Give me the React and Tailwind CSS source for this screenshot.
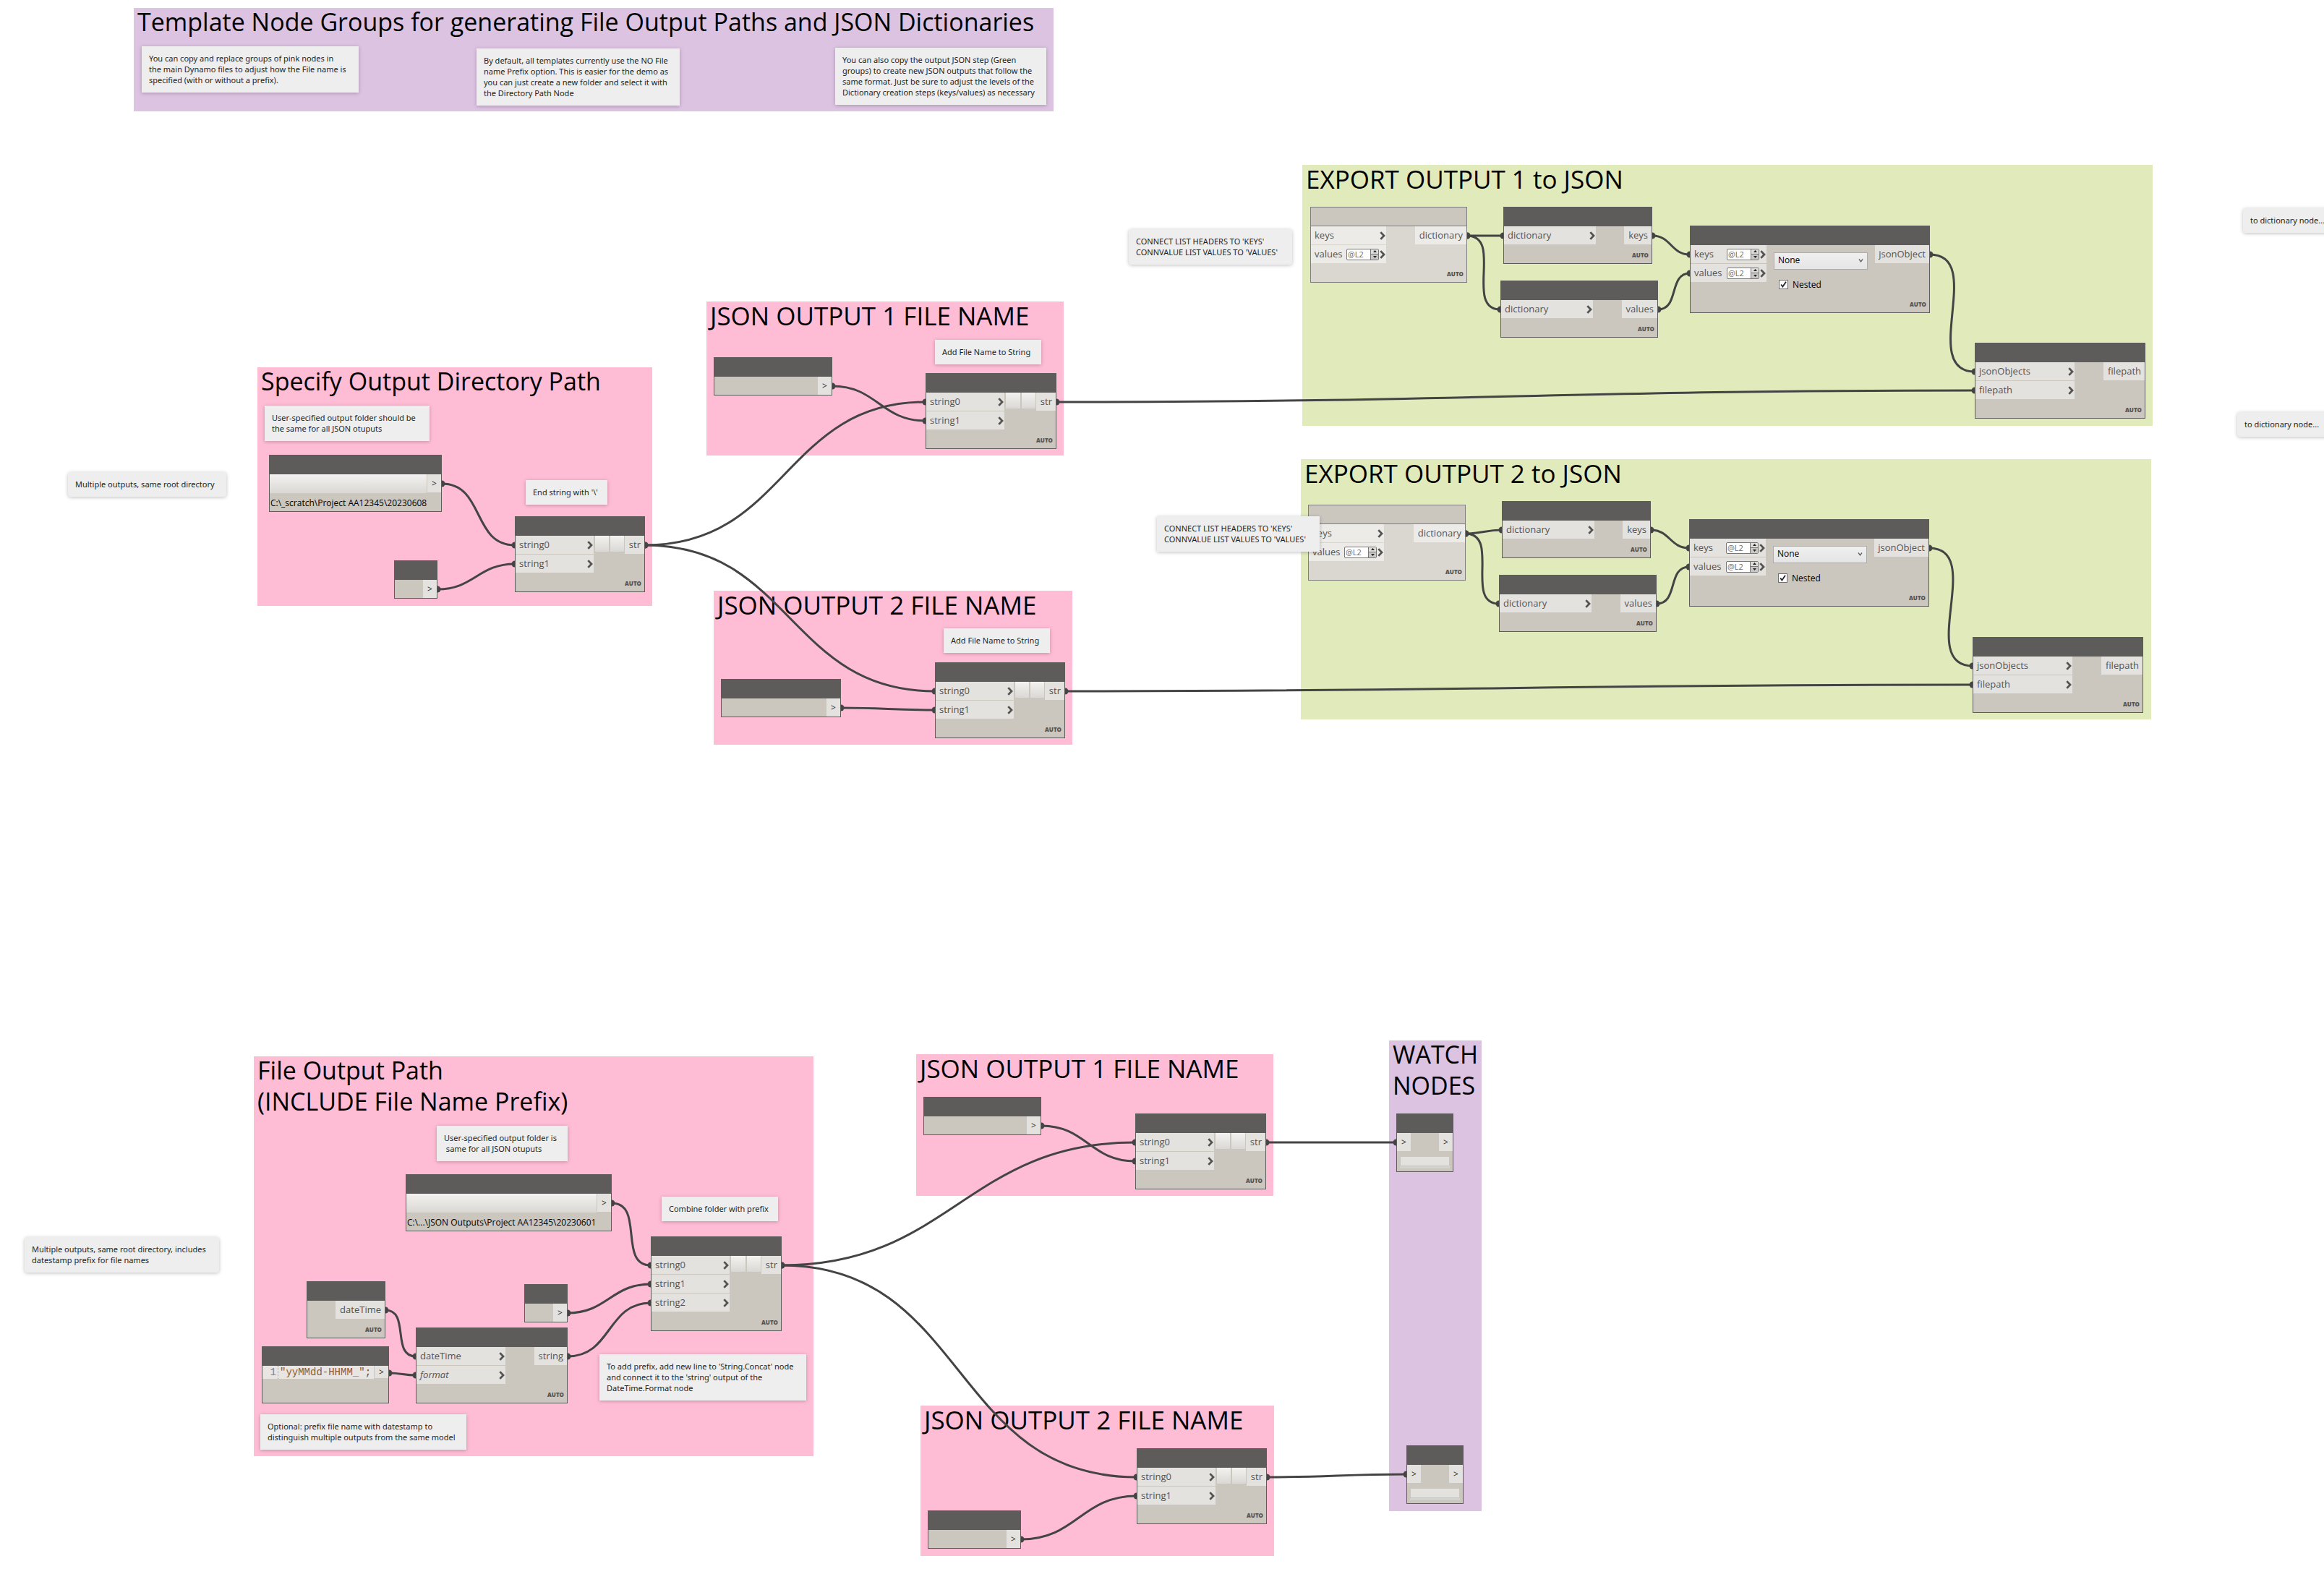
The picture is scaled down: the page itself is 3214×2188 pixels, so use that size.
import React from "react";

const GROUPS = [
  { color: "bg-[#ddc3e2]", x: 185, y: 11, w: 1272, h: 143, mixed: true, title: "Template Node Groups for generating File Output Paths and JSON Dictionaries" },
  { color: "bg-[#ffbdd5]", x: 356, y: 508, w: 546, h: 330, mixed: true, title: "Specify Output Directory Path" },
  { color: "bg-[#ffbdd5]", x: 977, y: 417, w: 494, h: 213, title: "JSON OUTPUT 1 FILE NAME" },
  { color: "bg-[#ffbdd5]", x: 987, y: 817, w: 496, h: 213, title: "JSON OUTPUT 2 FILE NAME" },
  { color: "bg-[#e0eaba]", x: 1801, y: 228, w: 1176, h: 361, title: "EXPORT OUTPUT 1 to JSON" },
  { color: "bg-[#e0eaba]", x: 1799, y: 635, w: 1176, h: 360, title: "EXPORT OUTPUT 2 to JSON" },
  { color: "bg-[#ffbdd5]", x: 351, y: 1461, w: 774, h: 553, mixed: true, title: "File Output Path\n(INCLUDE File Name Prefix)" },
  { color: "bg-[#ffbdd5]", x: 1267, y: 1458, w: 494, h: 196, title: "JSON OUTPUT 1 FILE NAME" },
  { color: "bg-[#ffbdd5]", x: 1273, y: 1944, w: 489, h: 208, title: "JSON OUTPUT 2 FILE NAME" },
  { color: "bg-[#ddc3e2]", x: 1921, y: 1439, w: 128, h: 651, mixed: true, title: "WATCH\nNODES" },
];

const NOTES = [
  { x: 196, y: 64, w: 300, text: "You can copy and replace groups of pink nodes in\nthe main Dynamo files to adjust how the File name is\nspecified (with or without a prefix)." },
  { x: 659, y: 67, w: 281, text: "By default, all templates currently use the NO File\nname Prefix option. This is easier for the demo as\nyou can just create a new folder and select it with\nthe Directory Path Node" },
  { x: 1155, y: 66, w: 292, text: "You can also copy the output JSON step (Green\ngroups) to create new JSON outputs that follow the\nsame format. Just be sure to adjust the levels of the\nDictionary creation steps (keys/values) as necessary" },
  { x: 366, y: 561, w: 228, text: "User-specified output folder should be\nthe same for all JSON otuputs" },
  { x: 94, y: 653, w: 219, loose: true, text: "Multiple outputs, same root directory" },
  { x: 727, y: 664, w: 113, text: "End string with '\\'" },
  { x: 1293, y: 470, w: 147, text: "Add File Name to String" },
  { x: 1305, y: 869, w: 147, text: "Add File Name to String" },
  { x: 1561, y: 317, w: 226, loose: true, text: "CONNECT LIST HEADERS TO 'KEYS'\nCONNVALUE LIST VALUES TO 'VALUES'" },
  { x: 1600, y: 714, w: 225, text: "CONNECT LIST HEADERS TO 'KEYS'\nCONNVALUE LIST VALUES TO 'VALUES'" },
  { x: 3102, y: 288, w: 126, loose: true, text: "to dictionary node..." },
  { x: 3094, y: 570, w: 126, loose: true, text: "to dictionary node..." },
  { x: 604, y: 1557, w: 181, text: "User-specified output folder is\n same for all JSON otuputs" },
  { x: 34, y: 1711, w: 269, loose: true, text: "Multiple outputs, same root directory, includes\ndatestamp prefix for file names" },
  { x: 915, y: 1655, w: 161, text: "Combine folder with prefix" },
  { x: 829, y: 1873, w: 286, text: "To add prefix, add new line to 'String.Concat' node\nand connect it to the 'string' output of the\nDateTime.Format node" },
  { x: 360, y: 1956, w: 285, text: "Optional: prefix file name with datestamp to\ndistinguish multiple outputs from the same model" },
];

const concat = (x, y, count = 2, w = 181) => ({
  kind: "ports", x, y, w, inW: 108, outW: 27, out: "str", variadic: true,
  ins: ["string0", "string1", "string2"].slice(0, count).map((label) => ({ label })),
});
const literal = (x, y, w) => ({ kind: "literal", x, y, w });
const dictIn = (x, y, w) => ({
  kind: "ports", x, y, w, inW: 104, outW: 71, out: "dictionary", light: true,
  ins: [{ label: "keys" }, { label: "values", level: true }],
});
const dictOut = (x, y, w, out, outW) => ({ kind: "ports", x, y, w, inW: 127, outW, out, ins: [{ label: "dictionary" }] });
const toJson = (x, y) => ({
  kind: "ports", x, y, w: 332, inW: 105, outW: 75, out: "jsonObject", options: true,
  ins: [{ label: "keys", level: true }, { label: "values", level: true }],
});
const exportJson = (x, y) => ({
  kind: "ports", x, y, w: 236, inW: 137, outW: 57, out: "filepath",
  ins: [{ label: "jsonObjects" }, { label: "filepath" }],
});

const NODES = {
  dirA: { kind: "path", x: 372, y: 629, w: 239, path: "C:\\_scratch\\Project AA12345\\20230608" },
  concatA: concat(712, 714, 2, 180),
  slashA: literal(545, 775, 60),
  name1: literal(987, 494, 164),
  concat1: concat(1280, 516),
  name2: literal(997, 939, 166),
  concat2: concat(1293, 916, 2, 180),
  dict1: dictIn(1812, 286, 217),
  keys1: dictOut(2079, 286, 206, "keys", 38),
  values1: dictOut(2075, 388, 218, "values", 49),
  json1: toJson(2337, 312),
  export1: exportJson(2731, 474),
  dict2: dictIn(1809, 698, 218),
  keys2: dictOut(2077, 693, 206, "keys", 38),
  values2: dictOut(2073, 795, 218, "values", 49),
  json2: toJson(2336, 718),
  export2: exportJson(2728, 881),
  dirB: { kind: "path", x: 561, y: 1624, w: 285, path: "C:\\...\\JSON Outputs\\Project AA12345\\20230601" },
  now: { kind: "ports", x: 424, y: 1772, w: 109, inW: 0, outW: 68, out: "dateTime", ins: [] },
  code: { kind: "code", x: 362, y: 1862, w: 176 },
  slashB: literal(725, 1776, 60),
  format: { kind: "ports", x: 575, y: 1836, w: 210, inW: 123, outW: 45, out: "string", ins: [{ label: "dateTime" }, { label: "format", italic: true }] },
  concatB: concat(900, 1710, 3),
  name3: literal(1277, 1517, 163),
  concat3: concat(1570, 1540),
  name4: literal(1283, 2089, 129),
  concat4: concat(1572, 2003, 2, 180),
  watch1: { kind: "watch", x: 1931, y: 1540, w: 79 },
  watch2: { kind: "watch", x: 1945, y: 1999, w: 79 },
};

const WIRES = [
  ["dirA", "concatA", 0], ["slashA", "concatA", 1],
  ["concatA", "concat1", 0], ["concatA", "concat2", 0],
  ["name1", "concat1", 1], ["name2", "concat2", 1],
  ["concat1", "export1", 1], ["concat2", "export2", 1],
  ["dict1", "keys1", 0], ["dict1", "values1", 0],
  ["keys1", "json1", 0], ["values1", "json1", 1], ["json1", "export1", 0],
  ["dict2", "keys2", 0], ["dict2", "values2", 0],
  ["keys2", "json2", 0], ["values2", "json2", 1], ["json2", "export2", 0],
  ["dirB", "concatB", 0], ["slashB", "concatB", 1], ["format", "concatB", 2],
  ["now", "format", 0], ["code", "format", 1],
  ["concatB", "concat3", 0], ["concatB", "concat4", 0],
  ["name3", "concat3", 1], ["name4", "concat4", 1],
  ["concat3", "watch1", 0], ["concat4", "watch2", 0],
];

function Wire({ from, to, row }) {
  const a = NODES[from];
  const b = NODES[to];
  const x1 = a.x + a.w;
  const y1 = a.y + (a.kind === "code" ? 37 : 40);
  const x2 = b.x;
  const y2 = b.y + 40 + row * 26;
  const bend = 0.45 * Math.hypot(x2 - x1, y2 - y1);
  return (
    <g>
      <path d={`M${x1} ${y1} C${x1 + bend} ${y1} ${x2 - bend} ${y2} ${x2} ${y2}`} fill="none" stroke="#444444" strokeWidth="3" />
      <circle cx={x1} cy={y1} r="4.5" fill="#444444" />
      <circle cx={x2} cy={y2} r="4.5" fill="#444444" />
    </g>
  );
}

function Group({ color, x, y, w, h, title, mixed }) {
  return (
    <section className={`absolute ${color}`} style={{ left: x, top: y, width: w, height: h }}>
      <h2 className={`-mt-0.5 whitespace-pre pl-[5px] leading-[43px] text-black ${mixed ? "text-[34px]" : "text-[35px]"}`}>{title}</h2>
    </section>
  );
}

function Note({ x, y, w, text, loose }) {
  return (
    <p
      className={`absolute whitespace-pre bg-[#eeeeee] px-[10px] pt-[9px] pb-[10px] font-['Noto_Sans','Open_Sans',sans-serif] text-[11px] leading-[15px] text-[#1f1f1f] shadow-[0_1px_5px_rgba(0,0,0,0.25)] ${loose ? "rounded" : ""}`}
      style={{ left: x, top: y, width: w }}
    >
      {text}
    </p>
  );
}

function Chevron() {
  return (
    <svg className="h-[12px] w-[8px] shrink-0" viewBox="0 0 8 12" aria-hidden="true">
      <path d="M1.3 1.1 L6 6 L1.3 10.9" fill="none" stroke="#555352" strokeWidth="2.8" />
    </svg>
  );
}

function Level({ name }) {
  return (
    <span className="flex h-4 w-[45px] shrink-0 overflow-hidden rounded-[2px] border border-[#777777] bg-white">
      <input type="text" readOnly defaultValue="@L2" aria-label={`${name} level`} className="min-w-0 flex-1 pl-px text-[11px] leading-[14px] text-[#6b6b6b] outline-none" />
      <span className="flex w-[11px] flex-col border-l border-[#777777]">
        <button type="button" aria-label={`Raise ${name} level`} className="flex flex-1 items-center justify-center border-b border-[#777777] bg-[#e0dedb]">
          <svg className="h-[3px] w-[5px]" viewBox="0 0 5 3" aria-hidden="true"><path d="M0 3 L2.5 0 L5 3 Z" fill="#222222" /></svg>
        </button>
        <button type="button" aria-label={`Lower ${name} level`} className="flex flex-1 items-center justify-center bg-[#c9c8c6]">
          <svg className="h-[3px] w-[5px]" viewBox="0 0 5 3" aria-hidden="true"><path d="M0 0 L2.5 3 L5 0 Z" fill="#222222" /></svg>
        </button>
      </span>
    </span>
  );
}

function Arrow({ short }) {
  return <span className={`flex w-[19px] shrink-0 items-center justify-center bg-[#e4e2df] text-[12px] text-[#2b2b2b] ${short ? "h-[17px]" : "h-[25px]"}`}>&gt;</span>;
}

function Auto() {
  return <div className="mt-auto flex h-[25px] items-end justify-end pr-1 pb-1 text-[8px] leading-[14px] font-extrabold text-[#555352]">AUTO</div>;
}

function Options({ id }) {
  return (
    <div className="flex flex-1 flex-col px-[10px] pt-[10px] pb-1.5">
      <div className="relative flex">
        <select aria-label="Nesting option" defaultValue="None" className="h-6 w-full appearance-none border border-[#acacac] bg-linear-to-b from-[#f0f0f0] to-[#e5e5e5] pb-0.5 pl-[5px] text-[12px] leading-[20px] text-black">
          <option>None</option>
        </select>
        <svg className="pointer-events-none absolute top-[9px] right-1.5 h-[5px] w-[7px]" viewBox="0 0 7 5" aria-hidden="true">
          <path d="M1 0.5 L3.5 3.8 L6 0.5" fill="none" stroke="#606060" strokeWidth="1.3" />
        </svg>
      </div>
      <div className="mt-[13px] flex items-center gap-1.5 pl-[7px]">
        <span className="relative flex">
          <input id={id} type="checkbox" defaultChecked className="peer h-[13px] w-[13px] appearance-none border border-[#707070] bg-white" />
          <svg className="pointer-events-none absolute inset-0 hidden h-[13px] w-[13px] peer-checked:block" viewBox="0 0 13 13" aria-hidden="true">
            <path d="M3.2 6.5 L5.4 9.5 L10 2.8" fill="none" stroke="#212121" strokeWidth="1.8" />
          </svg>
        </span>
        <label htmlFor={id} className="text-[12px] leading-[15px] text-black">Nested</label>
      </div>
    </div>
  );
}

function PortsBody({ id, node }) {
  const port = node.light ? "bg-[#ecebe8]" : "bg-[#e4e2df]";
  return (
    <>
      <div className="flex">
        {node.ins.length > 0 && (
          <div className="flex shrink-0 flex-col gap-px pb-px" style={{ width: node.inW }}>
            {node.ins.map((p) => (
              <div key={p.label} className={`flex h-[25px] items-center justify-between pr-px pl-[5px] ${port}`}>
                <span className={p.italic ? "italic" : ""}>{p.label}</span>
                <span className="flex items-center gap-px">
                  {p.level && <Level name={p.label} />}
                  <Chevron />
                </span>
              </div>
            ))}
          </div>
        )}
        {node.options ? (
          <Options id={`${id}-nested`} />
        ) : (
          <div className="flex flex-1 gap-0.5 pr-px pl-0.5">
            {node.variadic && (
              <>
                <button type="button" aria-label="Add input" className="h-[22px] flex-1 bg-linear-to-b from-[#f3f2f0] to-[#dad8d4]" />
                <button type="button" aria-label="Remove input" className="h-[22px] flex-1 bg-linear-to-b from-[#f3f2f0] to-[#dad8d4]" />
              </>
            )}
          </div>
        )}
        <div className={`flex h-[25px] shrink-0 items-center justify-end pr-[5px] ${port}`} style={{ width: node.outW }}>
          {node.out}
        </div>
      </div>
      {node.ins.length === 0 && <div className="h-px" />}
      <Auto />
    </>
  );
}

function Node({ id, node }) {
  const skin = node.light ? "border-[#7f7d7b] bg-[#dad7d0]" : "border-[#5e5c5a] bg-[#cbc6be]";
  const head = node.light ? "border-b border-[#7f7d7b] bg-[#cbc6be]" : "bg-[#5e5c5a]";
  return (
    <article className={`absolute flex flex-col border text-[13px] leading-[19px] text-[#555352] ${skin}`} style={{ left: node.x, top: node.y, width: node.w }}>
      <header className={`h-[26px] ${head}`} />
      {node.kind === "ports" && <PortsBody id={id} node={node} />}
      {node.kind === "literal" && (
        <div className="flex justify-end"><Arrow /></div>
      )}
      {node.kind === "path" && (
        <>
          <div className="flex gap-px">
            <button type="button" aria-label="Browse" className="h-[26px] flex-1 bg-linear-to-b from-[#f3f2f0] to-[#dad8d4]" />
            <Arrow />
          </div>
          <div className="h-[25px] whitespace-nowrap pl-px text-[12px] leading-[28px] text-black">{node.path}</div>
        </>
      )}
      {node.kind === "code" && (
        <div className="flex h-[51px] items-start gap-px">
          <div className="flex h-[18px] flex-1 bg-[#e8e5e2] font-['Liberation_Mono',monospace] text-[14px] leading-[18px]">
            <span className="w-[22px] border-r border-dotted border-[#a0a0a0] pr-0.5 text-right text-[#808080]">1</span>
            <span className="whitespace-nowrap pl-0.5"><span className="text-[#8f5a30]">"yyMMdd-HHMM_"</span>;</span>
          </div>
          <Arrow short />
        </div>
      )}
      {node.kind === "watch" && (
        <>
          <div className="flex justify-between"><Arrow /><Arrow /></div>
          <div className="flex flex-col gap-px px-1 pt-2 pb-1">
            <div className="mx-px h-3 bg-[#e4e2df]" />
            <div className="h-[3px] bg-[#d3d2d0]" />
          </div>
        </>
      )}
    </article>
  );
}

export default function App() {
  return (
    <main className="relative min-h-screen w-full overflow-hidden bg-white font-['Open_Sans','Noto_Sans',sans-serif]">
      {GROUPS.map((g, i) => <Group key={i} {...g} />)}
      <svg className="absolute inset-0 h-full w-full" aria-hidden="true">
        {WIRES.map(([from, to, row]) => <Wire key={`${from}-${to}-${row}`} from={from} to={to} row={row} />)}
      </svg>
      {Object.entries(NODES).map(([id, node]) => <Node key={id} id={id} node={node} />)}
      {NOTES.map((n, i) => <Note key={i} {...n} />)}
    </main>
  );
}
